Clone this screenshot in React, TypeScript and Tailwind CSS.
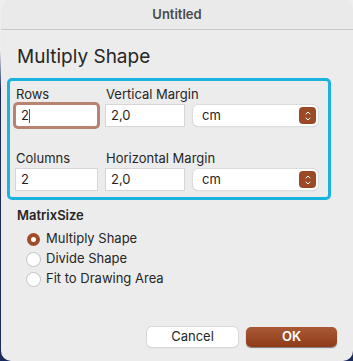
import { ChevronDown, ChevronUp } from "lucide-react";

const font = { fontFamily: "Inter, 'Noto Sans', sans-serif" };

const TextField = ({ value, width, focused }: { value: string; width: string; focused?: boolean }) => (
  <div
    className={`${width} h-[21px] bg-white flex items-center px-[5px] text-[13px] text-[#1f1f1f] ${
      focused
        ? "shadow-[0_0_0_3px_#b98372] rounded-[2px]"
        : "shadow-[0_0_0_1px_#d6d6d6,0_1px_0_#c4c4c4]"
    }`}
  >
    {value}
    {focused && <span className="w-px h-[14px] bg-[#9c3a18]" />}
  </div>
);

const UnitSelect = () => (
  <div className="w-[125px] h-[21px] rounded-[5px] bg-white shadow-[0_0_0_1px_#dcdcdc,0_1px_1px_#bdbdbd] flex items-center justify-between pl-[9px] pr-[2px] text-[13px] text-[#1f1f1f]">
    cm
    <div className="w-[17px] h-[17px] rounded-[4px] bg-[#9b4a25] flex flex-col items-center justify-center text-white">
      <ChevronUp size={8} strokeWidth={3} className="-mb-[1px]" />
      <ChevronDown size={8} strokeWidth={3} className="-mt-[1px]" />
    </div>
  </div>
);

const Radio = ({ label, checked }: { label: string; checked?: boolean }) => (
  <div className="flex items-center gap-[6px] h-[20px] text-[13px] text-[#262626]">
    {checked ? (
      <span className="w-[13px] h-[13px] rounded-full bg-[#a14c27] flex items-center justify-center">
        <span className="w-[5px] h-[5px] rounded-full bg-white" />
      </span>
    ) : (
      <span className="w-[13px] h-[13px] rounded-full bg-white shadow-[0_0_0_1px_#c9c9c9]" />
    )}
    {label}
  </div>
);

const App = () => {
  return (
    <div
      className="w-[353px] h-[361px] bg-[linear-gradient(#eeeeee_0,#eeeeee_50px,#1b2a5c_90px)]"
      style={font}
    >
      <div className="ml-px h-full rounded-[10px] bg-[#ececec] flex flex-col overflow-hidden">
        <div className="h-[30px] shrink-0 bg-[#eaeaea] border-b border-[#c9c9c9] flex items-center justify-center text-[13px] font-semibold text-[#4b4b4b]">
          Untitled
        </div>

        <div className="px-[16px] flex flex-col flex-1">
          <h1 className="mt-[15px] text-[19px] leading-[24px] text-[#262626]">Multiply Shape</h1>

          <div className="mt-[9px] -ml-[10px] w-[324px] h-[122px] rounded-[5px] border-[3px] border-[#1ab3df] pl-[6px] pt-[5px]">
            <div className="flex gap-[9px]">
              <div className="flex flex-col gap-[3px]">
                <span className="text-[13px] leading-[16px] text-[#262626]">Rows</span>
                <TextField value="2" width="w-[81px]" focused />
              </div>
              <div className="flex flex-col gap-[3px]">
                <span className="text-[13px] leading-[16px] text-[#262626]">Vertical Margin</span>
                <div className="flex gap-[9px]">
                  <TextField value="2,0" width="w-[78px]" />
                  <UnitSelect />
                </div>
              </div>
            </div>

            <div className="flex gap-[9px] mt-[24px]">
              <div className="flex flex-col gap-[3px]">
                <span className="text-[13px] leading-[16px] text-[#262626]">Columns</span>
                <TextField value="2" width="w-[81px]" />
              </div>
              <div className="flex flex-col gap-[3px]">
                <span className="text-[13px] leading-[16px] text-[#262626]">Horizontal Margin</span>
                <div className="flex gap-[9px]">
                  <TextField value="2,0" width="w-[78px]" />
                  <UnitSelect />
                </div>
              </div>
            </div>
          </div>

          <div className="mt-[7px] text-[13px] leading-[16px] font-semibold text-[#262626]">MatrixSize</div>
          <div className="mt-[6px] ml-[10px] flex flex-col">
            <Radio label="Multiply Shape" checked />
            <Radio label="Divide Shape" />
            <Radio label="Fit to Drawing Area" />
          </div>

          <div className="mt-auto mb-[14px] flex justify-end gap-[8px] pr-[-1px]">
            <button className="w-[91px] h-[20px] rounded-[5px] bg-white shadow-[0_0_0_1px_#d8d8d8,0_1px_1px_#bcbcbc] text-[13px] text-[#262626]">
              Cancel
            </button>
            <button className="w-[91px] h-[20px] rounded-[5px] bg-[linear-gradient(#a95a35,#8e3a18)] shadow-[0_1px_1px_#7a7a7a] text-[13px] font-semibold text-white">
              OK
            </button>
          </div>
        </div>
      </div>
    </div>
  );
};

export default App;
